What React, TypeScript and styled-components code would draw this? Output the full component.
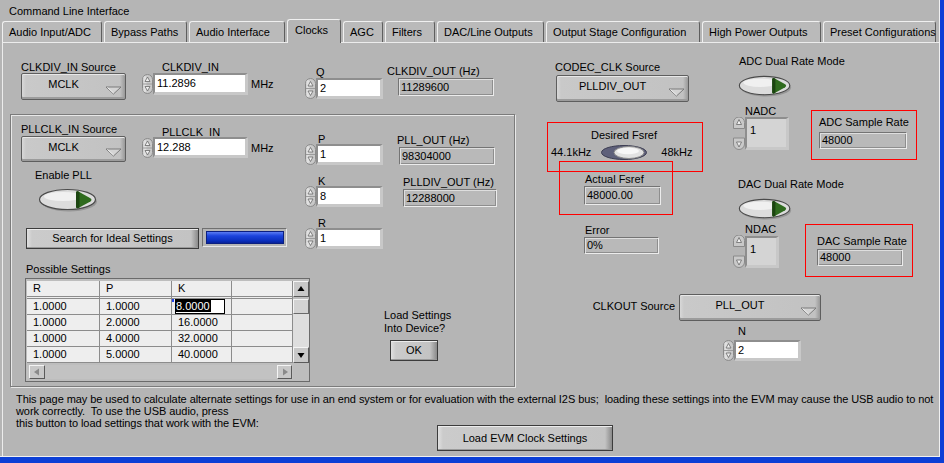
import React from 'react';
import styled, { createGlobalStyle } from 'styled-components';

const PANEL = '#b5b5b5';

type Offs = { $ml?: number; $mt?: number };
const offs = (p: Offs) => `margin-left: ${p.$ml ?? 0}px; margin-top: ${p.$mt ?? 0}px;`;

const GlobalStyle = createGlobalStyle`
  html, body {
    margin: 0;
    padding: 0;
    background: ${PANEL};
  }
  body {
    font-family: "Liberation Sans", Arial, sans-serif;
    font-size: 11px;
    color: #000;
  }
  * {
    box-sizing: border-box;
  }
`;

const Window = styled.div`
  width: 944px;
  height: 463px;
  overflow: hidden;
  display: flex;
  background: ${PANEL};
  border-right: 4px solid #0c3fd6;
  border-bottom: 6px solid #0c3fd6;
`;

const Frame = styled.div`
  flex: 1;
  min-width: 0;
  display: flex;
  flex-direction: column;
  border-right: 1px solid #f0f0f0;
  border-bottom: 1px solid #f0f0f0;
`;

const TitleBar = styled.div`
  height: 20px;
  padding: 5px 0 0 9px;
  line-height: 12px;
  flex: none;
`;

const TabRow = styled.div`
  height: 22px;
  flex: none;
  display: flex;
  align-items: flex-end;
  gap: 2px;
  padding-left: 2px;
  position: relative;
  z-index: 1;
`;

const Tab = styled.div<{ $w: number; $active?: boolean }>`
  flex: none;
  width: ${p => p.$w}px;
  height: ${p => (p.$active ? 24 : 21)}px;
  margin-bottom: ${p => (p.$active ? -1 : 0)}px;
  padding: 4px 0 0 ${p => (p.$active ? 7 : 6)}px;
  background: ${p => (p.$active ? PANEL : '#bababa')};
  border-top: 1px solid #f0f0f0;
  border-left: 1px solid #f0f0f0;
  border-right: 1px solid #5e5e5e;
  border-radius: 3px 3px 0 0;
  line-height: 12px;
  white-space: nowrap;
`;

const Panel = styled.div`
  flex: 1;
  min-height: 0;
  margin-left: 2px;
  border-top: 1px solid #ececec;
  border-left: 1px solid #ececec;
  display: flex;
  flex-direction: column;
`;

const MainRow = styled.div`
  display: flex;
  align-items: flex-start;
  padding-left: 7px;
`;

const LeftArea = styled.div`
  width: 505px;
  flex: none;
  display: flex;
  flex-direction: column;
`;

const TopRow = styled.div`
  height: 71px;
  display: flex;
  align-items: flex-start;
`;

const ControlGroup = styled.div<Offs & { $w?: number }>`
  ${offs};
  flex: none;
  display: flex;
  flex-direction: column;
  align-items: flex-start;
  ${p => (p.$w ? `width: ${p.$w}px;` : '')}
`;

const Label = styled.div<Offs & { $lh?: number }>`
  ${offs};
  line-height: ${p => p.$lh ?? 12}px;
  white-space: nowrap;
`;

const FieldRow = styled.div<Offs>`
  ${offs};
  display: flex;
  align-items: center;
`;

const Unit = styled.span<Offs>`
  ${offs};
  align-self: flex-start;
  line-height: 12px;
`;

const NumField = styled.div<{ $w: number; $h?: number; $dim?: boolean }>`
  flex: none;
  width: ${p => p.$w}px;
  height: ${p => p.$h ?? 21}px;
  background: ${p => (p.$dim ? '#d4d4d4' : '#ffffff')};
  border-style: solid;
  border-width: 2px 3px 3px 2px;
  border-color: #8e8e8e #c8c8c8 #c8c8c8 #8e8e8e;
  padding: ${p => (p.$dim ? '5px 0 0 3px' : '0 0 0 2px')};
  line-height: ${p => (p.$dim ? 12 : (p.$h ?? 21) - 5)}px;
`;

const Indicator = styled.div<Offs & { $w: number; $h?: number }>`
  ${offs};
  flex: none;
  width: ${p => p.$w}px;
  height: ${p => p.$h ?? 18}px;
  background: #b9b9b9;
  border: 1px solid;
  border-color: #747474 #ececec #ececec #747474;
  box-shadow: inset 1px 1px 0 #dedede, inset -1px -1px 0 #8e8e8e;
  padding-left: 2px;
  line-height: ${p => (p.$h ?? 18) - 2}px;
  white-space: nowrap;
`;

const Ring = styled.div<Offs & { $w: number; $h: number }>`
  ${offs};
  flex: none;
  display: flex;
  width: ${p => p.$w}px;
  height: ${p => p.$h}px;
  padding: 4px 3px 0 0;
  border: 1px solid #5e5e5e;
  border-radius: 2px;
  background: linear-gradient(to right, #d8d8d8 0, #c9c9c9 4px, #c2c2c2 calc(100% - 5px), #999999 100%);
  box-shadow: inset 0 1px 0 #e8e8e8, inset 0 -2px 0 #9c9c9c;
`;

const RingText = styled.div`
  flex: 1;
  text-align: center;
  line-height: 12px;
  white-space: nowrap;
`;

const RingArrow = styled.svg`
  flex: none;
  align-self: flex-end;
  margin-bottom: 4px;
`;

const PushButton = styled.div<Offs & { $w: number; $h: number }>`
  ${offs};
  flex: none;
  width: ${p => p.$w}px;
  height: ${p => p.$h}px;
  border: 1px solid #3c3c3c;
  background: linear-gradient(to right, #e0e0e0 0, #cbcbcb 5px, #c3c3c3 calc(100% - 7px), #8a8a8a 100%);
  box-shadow: inset 0 1px 0 #ececec, inset 0 -1px 0 #9a9a9a;
  text-align: center;
  line-height: ${p => p.$h - 2}px;
  white-space: nowrap;
`;

const StepperSvg = styled.svg`
  flex: none;
  display: block;
`;

const SwitchSvg = styled.svg<Offs>`
  ${offs};
  flex: none;
  display: block;
`;

const PllBox = styled.div`
  width: 505px;
  height: 273px;
  display: flex;
  align-items: flex-start;
  padding-left: 10px;
  border: 1px solid #7b7b7b;
  box-shadow: inset 1px 1px 0 #e8e8e8, 1px 1px 0 #e8e8e8;
`;

const InnerLeft = styled.div`
  width: 289px;
  flex: none;
  display: flex;
  flex-direction: column;
  align-items: flex-start;
`;

const InnerRight = styled.div`
  margin-left: -5px;
  margin-top: 18px;
  display: flex;
  flex-direction: column;
  align-items: flex-start;
`;

const ControlRow = styled.div<Offs>`
  ${offs};
  display: flex;
  align-items: flex-start;
`;

const ParamRow = styled.div`
  height: 42px;
  display: flex;
  align-items: flex-start;
`;

const Progress = styled.div<Offs>`
  ${offs};
  width: 85px;
  height: 19px;
  padding: 2px 2px 2px 3px;
  border: 1px solid;
  border-color: #707070 #e8e8e8 #e8e8e8 #707070;
`;

const ProgressFill = styled.div`
  height: 100%;
  border: 1px solid #0b1f80;
  background: linear-gradient(#5a7cf2, #1c44dc 35%, #0a2ebc 80%, #08229a);
`;

const TableFrame = styled.div<Offs>`
  ${offs};
  width: 285px;
  height: 104px;
  border: 1px solid #6b6b6b;
  background: #bdbdbd;
  padding: 2px 0 0 1px;
  display: grid;
  grid-template-columns: 266px 16px;
  grid-template-rows: 82px 2px 14px;
`;

const Cells = styled.div`
  display: grid;
  grid-template-columns: 73px 72px 60px 61px;
  grid-template-rows: 18px repeat(4, 16px);
  background: #eeeeee;
`;

const Cell = styled.div<{ $head?: boolean }>`
  position: relative;
  border-right: 1px solid #8c8c8c;
  border-bottom: ${p => (p.$head ? '3px double #8c8c8c' : '1px solid #8c8c8c')};
  padding-left: 6px;
  line-height: 15px;
  white-space: nowrap;
  overflow: hidden;
`;

const EditBox = styled.span`
  display: inline-block;
  vertical-align: top;
  margin: 0 0 0 -3px;
  width: 50px;
  height: 15px;
  border: 1px solid #000;
  background: #fff;
  line-height: 13px;
`;

const SelText = styled.span`
  background: #000;
  color: #fff;
  padding-right: 1px;
`;

const CellMark = styled.span`
  position: absolute;
  left: 0;
  top: 0;
  width: 2px;
  height: 3px;
  background: #2244ee;
`;

const VScroll = styled.div`
  grid-column: 2;
  grid-row: 1;
  display: grid;
  grid-template-rows: 16px 2px 15px 1fr 16px;
  background: #dedede;
`;

const ScrollGap = styled.div`
  background: #bdbdbd;
`;

const ScrollTrack = styled.div`
  background: #dedede;
`;

const ArrowBox = styled.div<{ $w?: number }>`
  ${p => (p.$w ? `width: ${p.$w}px;` : '')}
  display: flex;
  align-items: center;
  justify-content: center;
  background: #c8c8c8;
  border: 1px solid;
  border-color: #f4f4f4 #5a5a5a #5a5a5a #f4f4f4;
`;

const Thumb = styled.div`
  background: #d2d2d2;
  border: 1px solid;
  border-color: #f4f4f4 #6a6a6a #6a6a6a #f4f4f4;
`;

const HScroll = styled.div`
  grid-column: 1;
  grid-row: 3;
  display: flex;
  justify-content: space-between;
  padding: 0 1px 0 2px;
  background: #c2c2c2;
`;

const RightArea = styled.div`
  margin-left: 32px;
  display: flex;
  flex-direction: column;
  align-items: flex-start;
`;

const UpperRow = styled.div`
  display: flex;
  align-items: flex-start;
`;

const MidCol = styled.div`
  width: 156px;
  flex: none;
  display: flex;
  flex-direction: column;
  align-items: flex-start;
`;

const RightCol = styled.div`
  margin-left: 30px;
  display: flex;
  flex-direction: column;
  align-items: flex-start;
`;

const RedFrame = styled.div<Offs & { $w: number; $h: number }>`
  ${offs};
  flex: none;
  width: ${p => p.$w}px;
  height: ${p => p.$h}px;
  border: 1px solid #ff0000;
  display: flex;
  flex-direction: column;
  align-items: flex-start;
`;

const SwitchRow = styled.div<Offs>`
  ${offs};
  display: flex;
  align-items: flex-start;
`;

const ClkOutRow = styled.div`
  margin-top: 17px;
  display: flex;
  align-items: flex-start;
`;

const RightLabel = styled.div<Offs & { $w: number }>`
  ${offs};
  width: ${p => p.$w}px;
  text-align: right;
  line-height: 12px;
  white-space: nowrap;
`;

const Footer = styled.div`
  margin-top: 6px;
  padding-left: 13px;
  display: flex;
  flex-direction: column;
`;

const NoteLine = styled.div<{ $w?: number }>`
  ${p => (p.$w ? `width: ${p.$w}px;` : '')}
  flex: none;
  line-height: 12px;
  letter-spacing: -0.07px;
  white-space: pre;
`;

const NoteLastRow = styled.div`
  display: flex;
  align-items: flex-start;
`;

const tabs = [
  { name: 'Audio Input/ADC', w: 100 },
  { name: 'Bypass Paths', w: 83 },
  { name: 'Audio Interface', w: 96 },
  { name: 'Clocks', w: 54 },
  { name: 'AGC', w: 40 },
  { name: 'Filters', w: 50 },
  { name: 'DAC/Line Outputs', w: 107 },
  { name: 'Output Stage Configuration', w: 154 },
  { name: 'High Power Outputs', w: 119 },
  { name: 'Preset Configurations', w: 113 },
];

const rows = [
  ['1.0000', '1.0000', '8.0000'],
  ['1.0000', '2.0000', '16.0000'],
  ['1.0000', '4.0000', '32.0000'],
  ['1.0000', '5.0000', '40.0000'],
];

const Stepper = ({ h = 20 }: { h?: number }) => {
  if (h <= 24) {
    const mid = h / 2;
    return (
      <StepperSvg width={11} height={h} viewBox={`0 0 11 ${h}`}>
        <rect x="0.5" y="0.5" width="10" height={h - 1} rx="5" fill="#c9c9c9" stroke="#8a8a8a" />
        <rect x="1.5" y="2" width="3" height={h - 4} rx="1.5" fill="#e0e0e0" />
        <line x1="1" y1={mid} x2="10" y2={mid} stroke="#9c9c9c" />
        <path d={`M5.5 ${mid - 7} L8 ${mid - 2.5} L3 ${mid - 2.5} Z`} fill="#f0f0f0" stroke="#6a6a6a" strokeWidth="0.8" />
        <path d={`M5.5 ${mid + 7} L8 ${mid + 2.5} L3 ${mid + 2.5} Z`} fill="#f0f0f0" stroke="#6a6a6a" strokeWidth="0.8" />
      </StepperSvg>
    );
  }
  return (
    <StepperSvg width={12} height={h} viewBox={`0 0 12 ${h}`}>
      <path d="M0.5 11.5 V5.5 A5.5 5.5 0 0 1 11.5 5.5 V11.5 Z" fill="#c9c9c9" stroke="#8a8a8a" />
      <path d="M6 2.5 L8.5 7.5 L3.5 7.5 Z" fill="#f0f0f0" stroke="#6a6a6a" strokeWidth="0.8" />
      <path d={`M0.5 ${h - 12} V${h - 6} A5.5 5.5 0 0 0 11.5 ${h - 6} V${h - 12} Z`} fill="#c9c9c9" stroke="#8a8a8a" />
      <path d={`M6 ${h - 3} L8.5 ${h - 8} L3.5 ${h - 8} Z`} fill="#f0f0f0" stroke="#6a6a6a" strokeWidth="0.8" />
    </StepperSvg>
  );
};

const RingControl = ({ w, h = 27, value, ml, mt }: { w: number; h?: number; value: string; ml?: number; mt?: number }) => (
  <Ring $w={w} $h={h} $ml={ml} $mt={mt}>
    <RingText>{value}</RingText>
    <RingArrow width="17" height="9" viewBox="0 0 17 9">
      <path d="M1 1 H16 L8.5 8 Z" fill="#d4d4d4" stroke="#7a7a7a" strokeWidth="1" />
      <path d="M2.5 1.5 L8.5 7" stroke="#f2f2f2" strokeWidth="1" />
    </RingArrow>
  </Ring>
);

const Toggle = ({ w, h, ml, mt }: { w: number; h: number; ml?: number; mt?: number }) => (
  <SwitchSvg width={w} height={h} viewBox="0 0 60 24" preserveAspectRatio="none" $ml={ml} $mt={mt}>
    <ellipse cx="31" cy="13.5" rx="28" ry="10" fill="#7c7c7c" opacity="0.55" />
    <ellipse cx="29.5" cy="11.5" rx="28" ry="10" fill="#dcdcdc" stroke="#4a4a4a" strokeWidth="1.2" />
    <ellipse cx="25" cy="8.5" rx="19" ry="4.5" fill="#f0f0f0" />
    <path d="M38 5 C38 3.6 39.2 3 40.4 3.6 L52.4 10.2 C53.8 11 53.8 12.6 52.4 13.4 L40.4 20 C39.2 20.6 38 20 38 18.6 Z" fill="#2f6b1e" />
    <path d="M38 5 C38 3.6 39.2 3 40.4 3.6 L41.5 4.2 V19.4 L40.4 20 C39.2 20.6 38 20 38 18.6 Z" fill="#1b4410" />
  </SwitchSvg>
);

const SlideSwitch = ({ ml, mt }: { ml?: number; mt?: number }) => (
  <SwitchSvg width="46" height="15" viewBox="0 0 46 15" $ml={ml} $mt={mt}>
    <ellipse cx="23" cy="7.5" rx="22.5" ry="7" fill="#5e607a" stroke="#3c3d52" />
    <ellipse cx="28" cy="7.5" rx="15" ry="6" fill="#e2e2e2" stroke="#8a8a8a" />
    <ellipse cx="27" cy="6" rx="11" ry="3.3" fill="#f7f7f7" />
  </SwitchSvg>
);

const Tri = ({ dir, color }: { dir: 'up' | 'down' | 'left' | 'right'; color: string }) => {
  const d = {
    up: 'M4 1 L7.5 6 L0.5 6 Z',
    down: 'M4 7 L7.5 2 L0.5 2 Z',
    left: 'M1 4 L6 0.5 L6 7.5 Z',
    right: 'M7 4 L2 0.5 L2 7.5 Z',
  }[dir];
  return (
    <svg width="8" height="8" viewBox="0 0 8 8">
      <path d={d} fill={color} />
    </svg>
  );
};

export default function App() {
  return (
    <>
      <GlobalStyle />
      <Window>
        <Frame>
          <TitleBar>Command Line Interface</TitleBar>
          <TabRow>
            {tabs.map(t => (
              <Tab key={t.name} $w={t.w} $active={t.name === 'Clocks'}>
                {t.name}
              </Tab>
            ))}
          </TabRow>
          <Panel>
            <MainRow>
              <LeftArea>
                <TopRow>
                  <ControlGroup $ml={11} $mt={18}>
                    <Label>CLKDIV_IN Source</Label>
                    <RingControl w={105} value="MCLK" />
                  </ControlGroup>
                  <ControlGroup $ml={16} $mt={18} $w={163}>
                    <Label $ml={20}>CLKDIV_IN</Label>
                    <FieldRow>
                      <Stepper h={20} />
                      <NumField $w={95} $h={22}>11.2896</NumField>
                      <Unit $ml={3} $mt={5}>MHz</Unit>
                    </FieldRow>
                  </ControlGroup>
                  <ControlGroup $mt={23} $w={82}>
                    <Label $ml={11}>Q</Label>
                    <FieldRow>
                      <Stepper h={21} />
                      <NumField $w={67}>2</NumField>
                    </FieldRow>
                  </ControlGroup>
                  <ControlGroup $mt={22}>
                    <Label>CLKDIV_OUT (Hz)</Label>
                    <Indicator $ml={11} $mt={1} $w={96}>11289600</Indicator>
                  </ControlGroup>
                </TopRow>

                <PllBox>
                  <InnerLeft>
                    <ControlRow>
                      <ControlGroup $mt={8}>
                        <Label>PLLCLK_IN Source</Label>
                        <RingControl w={105} h={26} value="MCLK" mt={1} />
                      </ControlGroup>
                      <ControlGroup $ml={16} $mt={11}>
                        <Label $ml={20}>PLLCLK_IN</Label>
                        <FieldRow $mt={-1}>
                          <Stepper h={20} />
                          <NumField $w={95} $h={21}>12.288</NumField>
                          <Unit $ml={3} $mt={5}>MHz</Unit>
                        </FieldRow>
                      </ControlGroup>
                    </ControlRow>
                    <Label $ml={14} $mt={7}>Enable PLL</Label>
                    <Toggle w={60} h={24} ml={17} mt={7} />
                    <ControlRow $ml={5} $mt={16}>
                      <PushButton $w={173} $h={21}>Search for Ideal Settings</PushButton>
                      <Progress $ml={3}>
                        <ProgressFill />
                      </Progress>
                    </ControlRow>
                    <Label $ml={5} $mt={14}>Possible Settings</Label>
                    <TableFrame $ml={4} $mt={3}>
                      <Cells>
                        {['R', 'P', 'K', ''].map((h, i) => (
                          <Cell key={`h${i}`} $head>{h}</Cell>
                        ))}
                        {rows.map((r, i) => (
                          <React.Fragment key={i}>
                            <Cell>{r[0]}</Cell>
                            <Cell>{r[1]}</Cell>
                            <Cell>
                              {i === 0 ? (
                                <>
                                  <CellMark />
                                  <EditBox><SelText>{r[2]}</SelText></EditBox>
                                </>
                              ) : r[2]}
                            </Cell>
                            <Cell />
                          </React.Fragment>
                        ))}
                      </Cells>
                      <VScroll>
                        <ArrowBox><Tri dir="up" color="#000" /></ArrowBox>
                        <ScrollGap />
                        <Thumb />
                        <ScrollTrack />
                        <ArrowBox><Tri dir="down" color="#000" /></ArrowBox>
                      </VScroll>
                      <HScroll>
                        <ArrowBox $w={16}><Tri dir="left" color="#8a8a8a" /></ArrowBox>
                        <ArrowBox $w={15}><Tri dir="right" color="#8a8a8a" /></ArrowBox>
                      </HScroll>
                    </TableFrame>
                  </InnerLeft>

                  <InnerRight>
                    <ParamRow>
                      <ControlGroup $w={92}>
                        <Label $ml={13}>P</Label>
                        <FieldRow $mt={-1}>
                          <Stepper h={21} />
                          <NumField $w={67}>1</NumField>
                        </FieldRow>
                      </ControlGroup>
                      <ControlGroup $mt={1}>
                        <Label>PLL_OUT (Hz)</Label>
                        <Indicator $ml={2} $mt={1} $w={96}>98304000</Indicator>
                      </ControlGroup>
                    </ParamRow>
                    <ParamRow>
                      <ControlGroup $w={92}>
                        <Label $ml={13}>K</Label>
                        <FieldRow $mt={-1}>
                          <Stepper h={21} />
                          <NumField $w={67}>8</NumField>
                        </FieldRow>
                      </ControlGroup>
                      <ControlGroup $ml={6} $mt={1}>
                        <Label>PLLDIV_OUT (Hz)</Label>
                        <Indicator $mt={1} $w={94}>12288000</Indicator>
                      </ControlGroup>
                    </ParamRow>
                    <ParamRow>
                      <ControlGroup $w={92}>
                        <Label $ml={13}>R</Label>
                        <FieldRow $mt={-1}>
                          <Stepper h={21} />
                          <NumField $w={67}>1</NumField>
                        </FieldRow>
                      </ControlGroup>
                    </ParamRow>
                    <Label $ml={79} $mt={50} $lh={12.5}>
                      Load Settings
                      <br />
                      Into Device?
                    </Label>
                    <PushButton $ml={85} $mt={6} $w={48} $h={21}>OK</PushButton>
                  </InnerRight>
                </PllBox>
              </LeftArea>

              <RightArea>
                <UpperRow>
                  <MidCol>
                    <Label $ml={8} $mt={18}>CODEC_CLK Source</Label>
                    <RingControl w={133} value="PLLDIV_OUT" ml={9} mt={2} />
                    <RedFrame $mt={20} $w={156} $h={50}>
                      <Label $ml={43} $mt={6}>Desired Fsref</Label>
                      <SwitchRow $mt={5}>
                        <Label $ml={3}>44.1kHz</Label>
                        <SlideSwitch ml={10} mt={-1} />
                        <Label $ml={14}>48kHz</Label>
                      </SwitchRow>
                    </RedFrame>
                    <RedFrame $ml={12} $mt={-11} $w={114} $h={54}>
                      <Label $ml={25} $mt={11}>Actual Fsref</Label>
                      <Indicator $ml={24} $mt={1} $w={77} $h={19}>48000.00</Indicator>
                    </RedFrame>
                    <Label $ml={38} $mt={9}>Error</Label>
                    <Indicator $ml={37} $mt={1} $w={75} $h={17}>0%</Indicator>
                  </MidCol>

                  <RightCol>
                    <Label $ml={6} $mt={12}>ADC Dual Rate Mode</Label>
                    <Toggle w={54} h={22} ml={5} mt={8} />
                    <ControlRow $mt={8}>
                      <ControlGroup>
                        <Label $ml={12}>NADC</Label>
                        <FieldRow>
                          <Stepper h={33} />
                          <NumField $w={44} $h={33} $dim>1</NumField>
                        </FieldRow>
                      </ControlGroup>
                      <RedFrame $ml={22} $mt={5} $w={106} $h={50}>
                        <Label $ml={7} $mt={5}>ADC Sample Rate</Label>
                        <Indicator $ml={7} $mt={4} $w={88} $h={17}>48000</Indicator>
                      </RedFrame>
                    </ControlRow>
                    <Label $ml={5} $mt={18}>DAC Dual Rate Mode</Label>
                    <Toggle w={54} h={22} ml={5} mt={8} />
                    <ControlRow $mt={3}>
                      <ControlGroup>
                        <Label $ml={12}>NDAC</Label>
                        <FieldRow>
                          <Stepper h={33} />
                          <NumField $w={34} $h={32} $dim>1</NumField>
                        </FieldRow>
                      </ControlGroup>
                      <RedFrame $ml={26} $mt={1} $w={108} $h={53}>
                        <Label $ml={11} $mt={10}>DAC Sample Rate</Label>
                        <Indicator $ml={11} $mt={2} $w={86} $h={17}>48000</Indicator>
                      </RedFrame>
                    </ControlRow>
                  </RightCol>
                </UpperRow>

                <ClkOutRow>
                  <RightLabel $w={128} $mt={6}>CLKOUT Source</RightLabel>
                  <RingControl w={142} value="PLL_OUT" ml={4} />
                </ClkOutRow>
                <ControlGroup $ml={176} $mt={4}>
                  <Label $ml={15}>N</Label>
                  <FieldRow $mt={3}>
                    <Stepper h={21} />
                    <NumField $w={67}>2</NumField>
                  </FieldRow>
                </ControlGroup>
              </RightArea>
            </MainRow>

            <Footer>
              <NoteLine>
                This page may be used to calculate alternate settings for use in an end system or for evaluation with the external I2S bus;  loading these settings into the EVM may cause the USB audio to not
              </NoteLine>
              <NoteLine>work correctly.  To use the USB audio, press</NoteLine>
              <NoteLastRow>
                <NoteLine $w={421}>this button to load settings that work with the EVM:</NoteLine>
                <PushButton $mt={8} $w={176} $h={26}>Load EVM Clock Settings</PushButton>
              </NoteLastRow>
            </Footer>
          </Panel>
        </Frame>
      </Window>
    </>
  );
}
